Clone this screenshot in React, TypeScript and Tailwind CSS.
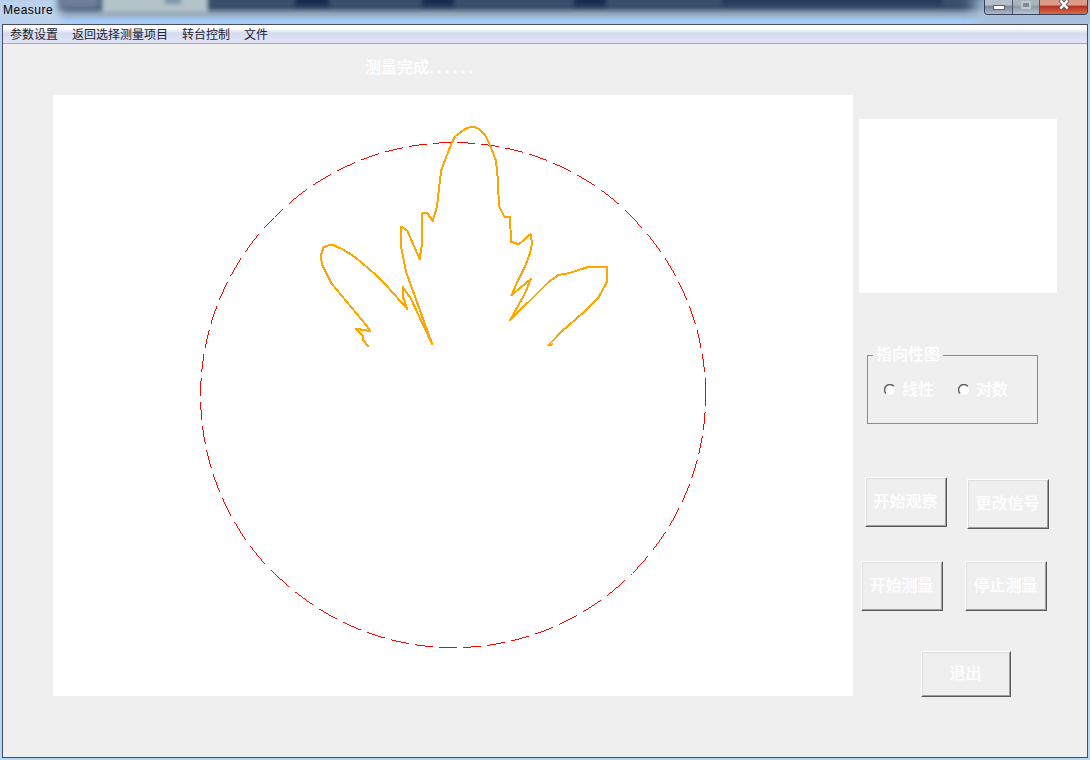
import React from "react";

const CJK = "font-['Liberation_Sans','Noto_Sans_CJK_SC',sans-serif]";

const MENU = ["参数设置", "返回选择测量项目", "转台控制", "文件"];

const PATTERN: [number, number][] = [
  [368.3, 346.7], [363.5, 340.5], [362.8, 335.5], [355.9, 328.8], [370, 331], [366.7, 325.7],
  [331.3, 283.3], [322.5, 265.7], [320.6, 256], [323.5, 247.5], [329.3, 244.8], [333.3, 245],
  [343.3, 249.7], [355, 257], [373.3, 272.7], [388.3, 287.7], [407.3, 309], [402.9, 296.7],
  [402.6, 286.9], [410.7, 298.3], [432.3, 344.5], [406, 271.7], [400.6, 244], [401, 226.7],
  [407.3, 230.7], [419.7, 259], [422, 243.3], [422.4, 212.9], [427.3, 212.9], [432.7, 221],
  [437, 206.7], [439, 188.3], [441.3, 170], [451.7, 142.7], [455.5, 136], [465, 129],
  [471, 126.9], [475, 127.3], [479.3, 129.2], [485, 135.2], [490, 145], [496, 160.7],
  [497.7, 178.3], [499, 205.7], [504.5, 216.8], [510, 217], [511, 241.7], [519, 244.3],
  [530.5, 234], [532.1, 243.3], [530, 253.3], [525, 266.7], [516.7, 283.3], [511.5, 295.3],
  [530.7, 279], [525, 293.3], [510, 320.3], [548.3, 282.3], [558.3, 275], [568.3, 273.3],
  [588.3, 267], [606.8, 266.9], [607, 281.7], [598.3, 297.7], [581.7, 314], [563.3, 330],
  [548.3, 345.3], [553.3, 344.2],
];

// Walks the reference circle one pixel at a time: 18 pixels on, 6 off.
function dashedCircle(cx: number, cy: number, r: number) {
  const q = Math.floor(r / Math.SQRT2);
  const pixels: [number, number][] = [];
  const span = (d: number) => Math.sqrt(r * r - d * d);
  for (let y = 0; y >= -q; y--) pixels.push([cx + span(y), cy + y]);
  for (let x = q; x >= -q; x--) pixels.push([cx + x, cy - span(x)]);
  for (let y = -q + 1; y <= q; y++) pixels.push([cx - span(y), cy + y]);
  for (let x = -q; x <= q; x++) pixels.push([cx + x, cy + span(x)]);
  for (let y = q - 1; y > 0; y--) pixels.push([cx + span(y), cy + y]);
  return pixels
    .filter((_, i) => i % 24 < 18)
    .map(([x, y]) => `M${Math.round(x)} ${Math.round(y)}h1v1h-1z`)
    .join("");
}

function Plot() {
  return (
    <svg className="block h-full w-full" viewBox="53 95 800 601">
      <path d={dashedCircle(452.6, 394.6, 252.5)} fill="#f00" shapeRendering="crispEdges" />
      <polyline
        points={PATTERN.map((p) => p.join(",")).join(" ")}
        fill="none"
        stroke="#ffa500"
        strokeWidth="2"
        strokeLinejoin="round"
        shapeRendering="crispEdges"
      />
    </svg>
  );
}

function PushButton({ label, className }: { label: string; className: string }) {
  return (
    <button
      className={`shrink-0 border border-t-white border-l-white border-r-[#5c585c] border-b-[#5c585c] text-[16px] font-medium text-white ${className}`}
    >
      <span className="flex h-full w-full items-center justify-center border border-t-[#dcdcdc] border-l-[#dcdcdc] border-r-[#a09ca0] border-b-[#a09ca0] pr-px">
        {label}
      </span>
    </button>
  );
}

function Radio({ label }: { label: string }) {
  return (
    <label className="flex w-[74px] items-center gap-[6px] text-[16px] leading-[20px] font-medium text-white">
      <svg className="h-3 w-3" viewBox="0 0 12 12">
        <circle cx="6" cy="6" r="5" fill="#fff" />
        <path d="M2 9.6A5.2 5.2 0 0 1 9.8 2.2" fill="none" stroke="#606060" strokeWidth="1.5" />
      </svg>
      {label}
    </label>
  );
}

function TitleBar() {
  return (
    <header className="relative flex h-6 shrink-0 justify-between overflow-hidden bg-linear-to-b from-[#38506c] from-30% via-[#8f9fb4] via-55% to-[#a5cdf6] to-85%">
      <div className="absolute -top-2 -left-4 h-9 w-[76px] bg-[#bdd3ec] blur-[5px]" />
      <div className="absolute -top-2 left-[60px] h-[17px] w-[40px] bg-[#71809a] blur-[3px]" />
      <div className="absolute -top-2 left-[102px] h-[21px] w-[106px] bg-[#b4c3ca] blur-[2px]" />
      <div className="absolute -top-1 left-[165px] h-2 w-[16px] bg-[#7d95a6] blur-[2px]" />
      <div className="absolute -top-1 left-[295px] h-[10px] w-[34px] bg-[#172b50] blur-[2px]" />
      <div className="absolute -top-1 left-[422px] h-[10px] w-[32px] bg-[#172b50] blur-[2px]" />
      <div className="absolute -top-1 left-[574px] h-[10px] w-[32px] bg-[#172b50] blur-[2px]" />
      <div className="absolute -top-1 left-[722px] h-[9px] w-[220px] bg-[#243b5c] blur-[2px]" />
      <div className="absolute -top-2 left-[975px] h-10 w-[130px] bg-[#a9c1da] blur-[8px]" />
      <span className="relative pt-[2px] pl-[3px] text-[12px] leading-[16px] tracking-[0.5px] text-black">Measure</span>
      <div className="relative mr-[2px] flex h-[15px] w-[104px] overflow-hidden rounded-b-[4px] border border-t-0 border-[#35405a]">
        <div className="flex w-[28px] justify-center border-r border-[#4b566a] bg-linear-to-b from-[#b6bfca] from-35% via-[#7b8998] via-45% to-[#aab8c7]">
          <div className="mt-[5px] h-[5px] w-[12px] border border-[#59616d] bg-white" />
        </div>
        <div className="flex w-[27px] justify-center border-r border-[#4b566a] bg-linear-to-b from-[#a9b3c0] from-35% via-[#8b98a7] via-45% to-[#b5c2cf]">
          <div className="mt-[1px] h-[8px] w-[10px] border-2 border-[#c4c9d0] bg-[#7e8995]" />
        </div>
        <div className="flex flex-1 justify-center bg-linear-to-b from-[#dc9a89] from-35% via-[#b5301c] via-45% to-[#d66a4c]">
          <svg className="h-[10px] w-[12px]" viewBox="0 0 12 10">
            <path d="M2 0L10 9M10 0L2 9" stroke="#4a4a5a" strokeWidth="4" />
            <path d="M2.4 0.4L9.6 8.6M9.6 0.4L2.4 8.6" stroke="#fff" strokeWidth="2.4" />
          </svg>
        </div>
      </div>
    </header>
  );
}

export default function App() {
  return (
    <div className={`flex h-[760px] w-[1090px] flex-col overflow-hidden bg-[#b4d8f5] ${CJK}`}>
      <TitleBar />
      <div className="mr-[2px] ml-[2px] flex h-[734px] flex-col border border-[#4a4c60] bg-[#f0eff0]">
        <nav className="flex h-[19px] shrink-0 items-center gap-[14px] border-b border-[#a3a8b8] bg-linear-to-b from-white from-20% via-[#d5dcf0] via-45% to-[#e2e3f5] pt-[2px] pl-[7px] text-[12px] leading-[16px] text-[#20202c]">
          {MENU.map((item) => (
            <span key={item}>{item}</span>
          ))}
        </nav>
        <main className="flex min-h-0 flex-1">
          <section className="ml-[50px] w-[800px] shrink-0">
            <p className="h-[51px] pt-[14px] pl-[312px] text-[16px] leading-[20px] font-medium text-white">
              测量完成<span className="tracking-[3.5px]">......</span>
            </p>
            <div className="h-[601px] bg-white">
              <Plot />
            </div>
          </section>
          <aside className="flex w-[231px] shrink-0 flex-col">
            <div className="mt-[75px] ml-[6px] h-[174px] w-[198px] shrink-0 bg-white" />
            <div className="mt-[52px] ml-[14px] h-[79px] w-[171px] shrink-0">
              <fieldset className="h-full border border-[#8c8c8c]">
                <legend className="ml-[5px] px-[3px] text-[16px] leading-[20px] font-medium text-white">指向性图</legend>
                <div className="flex pt-[15px] pl-[16px]">
                  <Radio label="线性" />
                  <Radio label="对数" />
                </div>
              </fieldset>
            </div>
            <div className="mt-[53px] ml-[12px] flex h-[52px] items-start gap-5">
              <PushButton label="开始观察" className="h-[50px] w-[82px]" />
              <PushButton label="更改信号" className="mt-[2px] h-[50px] w-[82px]" />
            </div>
            <div className="mt-8 ml-2 flex h-[50px] gap-[22px]">
              <PushButton label="开始测量" className="h-[50px] w-[82px]" />
              <PushButton label="停止测量" className="h-[50px] w-[82px]" />
            </div>
            <PushButton label="退出" className="mt-10 ml-[68px] h-[46px] w-[90px]" />
          </aside>
        </main>
      </div>
    </div>
  );
}
